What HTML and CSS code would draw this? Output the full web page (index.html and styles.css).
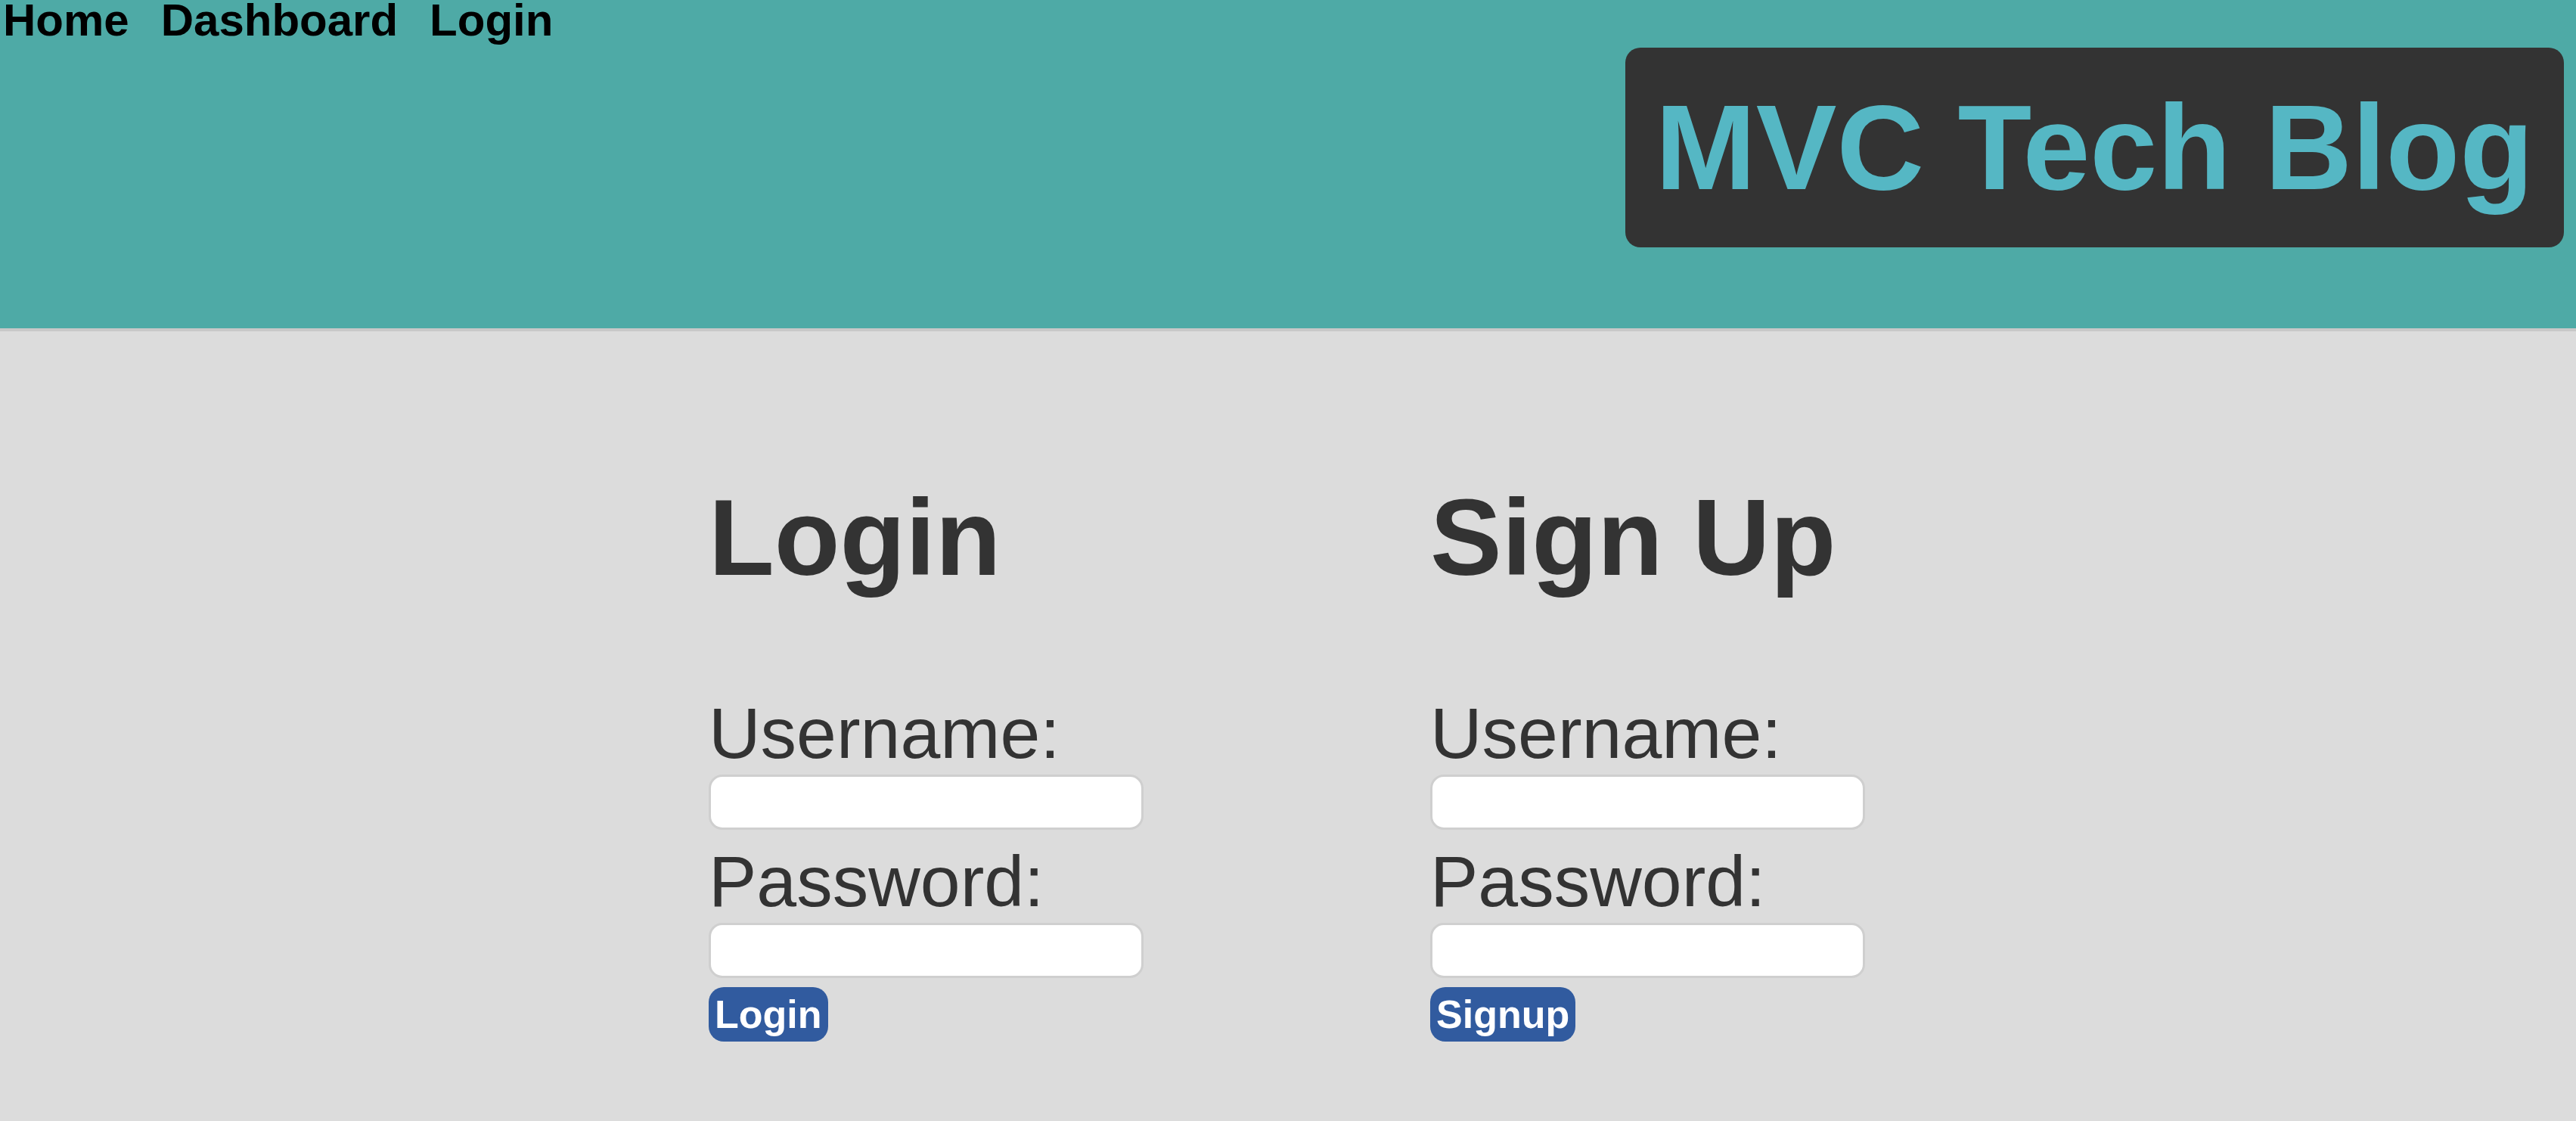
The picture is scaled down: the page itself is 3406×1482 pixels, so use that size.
FILE: index.html
```html
<!DOCTYPE html>
<html lang="en">
<head>
<meta charset="utf-8">
<title>MVC Tech Blog</title>
<link rel="stylesheet" href="styles.css">
</head>
<body>
<header class="site-header">
  <nav class="nav">
    <a class="nav-link" href="#">Home</a>
    <a class="nav-link" href="#">Dashboard</a>
    <a class="nav-link" href="#">Login</a>
  </nav>
  <h1 class="brand">MVC Tech Blog</h1>
</header>
<main class="forms">
  <section class="form-col">
    <h2 class="form-title">Login</h2>
    <form class="form">
      <label class="field-label" for="login-user">Username:</label>
      <input class="field-input" id="login-user" type="text">
      <label class="field-label" for="login-pass">Password:</label>
      <input class="field-input" id="login-pass" type="password">
      <button class="btn" type="button">Login</button>
    </form>
  </section>
  <section class="form-col">
    <h2 class="form-title">Sign Up</h2>
    <form class="form">
      <label class="field-label" for="signup-user">Username:</label>
      <input class="field-input" id="signup-user" type="text">
      <label class="field-label" for="signup-pass">Password:</label>
      <input class="field-input" id="signup-pass" type="password">
      <button class="btn" type="button">Signup</button>
    </form>
  </section>
</main>
</body>
</html>
```

FILE: styles.css
```css
* {
  box-sizing: border-box;
}

html, body {
  margin: 0;
  padding: 0;
}

body {
  background: #dcdcdc;
  font-family: "Liberation Sans", Arial, Helvetica, sans-serif;
  color: #333333;
  min-height: 1482px;
}

.site-header {
  display: flex;
  justify-content: space-between;
  align-items: flex-start;
  height: 438px;
  background: #4eaaa6;
  border-bottom: 4px solid #c8c8c8;
}

.nav {
  display: flex;
  gap: 42px;
  padding-left: 4px;
}

.nav-link {
  font-size: 60px;
  line-height: 54px;
  font-weight: bold;
  color: #000000;
  text-decoration: none;
}

.brand {
  margin: 63px 16px 0 0;
  padding: 40px 40px;
  background: #333333;
  color: #55b7c4;
  font-size: 160px;
  font-weight: bold;
  line-height: normal;
  border-radius: 20px;
  white-space: nowrap;
}

.forms {
  display: grid;
  grid-template-columns: 954px 954px;
  padding: 191px 0 0 937px;
}

.form-title {
  margin: 0 0 122px;
  font-size: 142px;
  font-weight: bold;
  line-height: normal;
  color: #333333;
}

.form {
  display: flex;
  flex-direction: column;
  align-items: flex-start;
}

.field-label {
  font-size: 95px;
  line-height: normal;
  color: #333333;
}

.field-input {
  width: 575px;
  height: 73px;
  margin: 0 0 14px;
  background: #ffffff;
  border: 3px solid #cfcfcf;
  border-radius: 18px;
  font-size: 40px;
  outline: none;
}

.field-input + .btn {
  margin-top: -2px;
}

.btn {
  padding: 6px 8px;
  border: none;
  border-radius: 20px;
  background: #315b9f;
  color: #ffffff;
  font-family: "Liberation Sans", Arial, Helvetica, sans-serif;
  font-size: 52px;
  font-weight: bold;
  line-height: normal;
  cursor: pointer;
}
```
